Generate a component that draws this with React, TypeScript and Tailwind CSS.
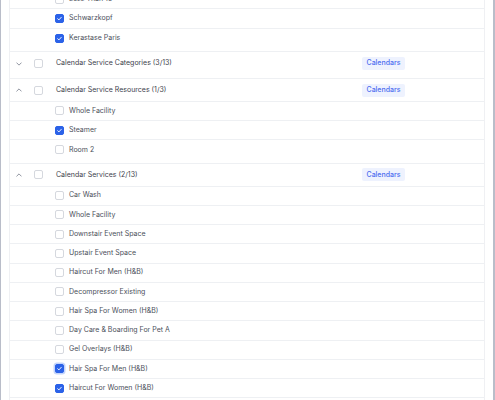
import clsx from "clsx";

type Item = { label: string; checked?: boolean; focused?: boolean };
type Group = { title?: string; open: boolean; items: Item[] };

const groups: Group[] = [
  {
    open: true,
    items: [
      { label: "Less Than 15" },
      { label: "Schwarzkopf", checked: true },
      { label: "Kerastase Paris", checked: true },
    ],
  },
  { title: "Calendar Service Categories (3/13)", open: false, items: [] },
  {
    title: "Calendar Service Resources (1/3)",
    open: true,
    items: [{ label: "Whole Facility" }, { label: "Steamer", checked: true }, { label: "Room 2" }],
  },
  {
    title: "Calendar Services (2/13)",
    open: true,
    items: [
      { label: "Car Wash" },
      { label: "Whole Facility" },
      { label: "Downstair Event Space" },
      { label: "Upstair Event Space" },
      { label: "Haircut For Men (H&B)" },
      { label: "Decompressor Existing" },
      { label: "Hair Spa For Women (H&B)" },
      { label: "Day Care & Boarding For Pet A" },
      { label: "Gel Overlays (H&B)" },
      { label: "Hair Spa For Men (H&B)", checked: true, focused: true },
      { label: "Haircut For Women (H&B)", checked: true },
    ],
  },
];

const Box = ({ checked, focused }: { checked?: boolean; focused?: boolean }) => (
  <span
    className={clsx(
      "flex h-[9px] w-[9px] shrink-0 items-center justify-center rounded-[2px] border",
      checked ? "border-[#2b62e8] bg-[#2b62e8]" : "border-[#d5d8de] bg-white",
      focused && "shadow-[0_0_0_1.5px_#c5d5fb]"
    )}
  >
    {checked && (
      <svg viewBox="0 0 10 10" className="h-[7px] w-[7px]">
        <path d="M2.4 5.3 4.2 7 7.6 3.2" fill="none" stroke="white" strokeWidth="1.3" strokeLinecap="round" strokeLinejoin="round" />
      </svg>
    )}
  </span>
);

const Chevron = ({ up }: { up: boolean }) => (
  <svg viewBox="0 0 8 5" className="h-[4px] w-[6px]">
    <path
      d={up ? "M1 4 4 1 7 4" : "M1 1 4 4 7 1"}
      fill="none"
      stroke="#6b7280"
      strokeWidth="1"
      strokeLinecap="round"
      strokeLinejoin="round"
    />
  </svg>
);

export default function App() {
  return (
    <div className="h-[400px] w-[495px] overflow-hidden border-l border-r-2 border-[#b9bdc9] bg-white px-[8px] font-['Inter',sans-serif]">
      <div className="-mt-[10px] border-x border-[#eff0f3]">
        {groups.map((g, gi) => {
          const last = gi === groups.length - 1;
          return (
            <div key={gi} className="border-b border-[#eef0f3] pb-[3.5px]">
              {g.title && (
                <div className={clsx("flex h-[22.5px] items-center pl-[4.5px]", g.open && "border-b border-[#eef0f3]")}>
                  <span className="flex w-[8px] justify-center">
                    <Chevron up={g.open} />
                  </span>
                  <span className="ml-[11.5px]">
                    <Box />
                  </span>
                  <span className="ml-[13px] w-[306px] text-[7px] text-[#3d414c]">{g.title}</span>
                  <span className="flex h-[13px] items-center rounded-[2px] bg-[#eef2fe] px-[4.5px] text-[7px] font-medium text-[#4d6ef0]">
                    Calendars
                  </span>
                </div>
              )}
              {g.open &&
                g.items.map((it, i) => (
                  <div
                    key={i}
                    className={clsx(
                      "flex h-[19.25px] items-center pl-[45px]",
                      (i < g.items.length - 1 || last) && "border-b border-[#eef0f3]"
                    )}
                  >
                    <Box checked={it.checked} focused={it.focused} />
                    <span className="ml-[5px] text-[7px] text-[#4b4f5a]">{it.label}</span>
                  </div>
                ))}
              {last && <div className="h-[19.25px]" />}
            </div>
          );
        })}
      </div>
    </div>
  );
}
